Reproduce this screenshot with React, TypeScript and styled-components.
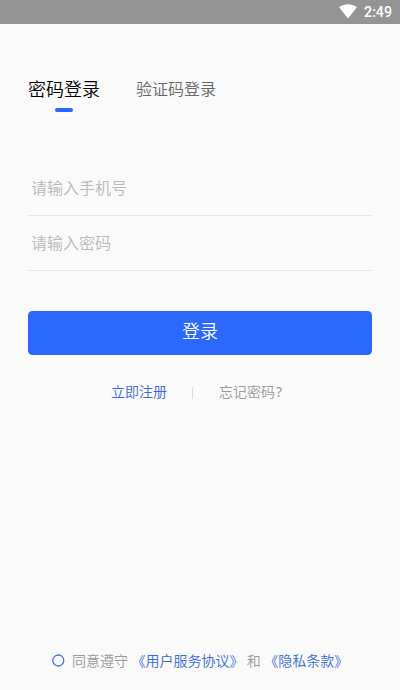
import React from 'react';
import styled, { createGlobalStyle } from 'styled-components';

const GlobalStyle = createGlobalStyle`
  * { box-sizing: border-box; }
  body { margin: 0; background: #fafafa; font-family: Roboto, "Noto Sans CJK SC", sans-serif; font-weight: 350; }
  button, input { font: inherit; border: 0; padding: 0; background: none; outline: 0; }
`;
const Screen = styled.div`
  width: 400px; height: 690px; display: flex; flex-direction: column; background: #fafafa; overflow: hidden;
`;
const StatusBar = styled.header`
  height: 24px; flex: none; display: flex; align-items: center; justify-content: flex-end; gap: 7px;
  padding-right: 8px; background: #949494; color: #fff; font-family: Roboto, sans-serif; font-size: 14.2px; font-weight: 500; line-height: 24px;
`;
const WifiIcon = styled.svg`
  display: block; margin-bottom: 2px;
`;
const Main = styled.main`
  flex: 1; display: flex; flex-direction: column; padding: 0 28px;
`;
const Tabs = styled.nav`
  display: flex; gap: 36px; margin-top: 52px; height: 36px;
`;
const Tab = styled.button<{ $active?: boolean }>`
  display: flex; flex-direction: column; align-items: center; height: 36px; line-height: 28px;
  font-size: ${p => (p.$active ? 18 : 16)}px; color: ${p => (p.$active ? '#000' : '#666')};
  &::after { content: ''; width: 18px; height: 4px; margin-top: 4px; border-radius: 2px; background: ${p => (p.$active ? '#2b68ff' : 'transparent')}; }
`;
const Form = styled.form`
  display: flex; flex-direction: column; margin-top: 49px;
`;
const Field = styled.input`
  height: 55px; padding: 0 3px; border-bottom: 1px solid #e5e5e5; font-size: 16px; color: #333;
  &::placeholder { color: #b8b8b8; opacity: 1; }
`;
const Submit = styled.button`
  height: 44px; margin-top: 40px; border-radius: 4.5px; background: #2b68ff; color: #fff; font-size: 18px; line-height: 42px; padding-bottom: 2px;
`;
const Links = styled.div`
  display: flex; align-items: center; margin: 27px 0 0 83px; height: 20px; font-size: 14px; line-height: 20px;
`;
const TextLink = styled.a<{ $muted?: boolean }>`
  color: ${p => (p.$muted ? '#999' : '#3769d5')};
`;
const QuestionMark = styled.span`
  margin-left: 1px; font-family: "Noto Sans", sans-serif; font-weight: 400;
`;
const Divider = styled.i`
  width: 1px; height: 12px; margin: 2px 26px 0 25px; background: #ddd;
`;
const Agreement = styled.footer`
  display: flex; align-items: center; height: 20px; margin: auto 0 19px 24px; font-size: 14px; line-height: 20px; color: #999; white-space: pre;
`;
const Radio = styled.svg`
  display: block; margin: 0 7px 1px 0;
`;

export default function App() {
  return (
    <Screen>
      <GlobalStyle />
      <StatusBar>
        <WifiIcon width="18" height="15" viewBox="0 0 18 15"><path d="M0 3.3C5.2-.7 12.8-.7 18 3.3L9 14.5Z" fill="#fff" /></WifiIcon>
        <span>2:49</span>
      </StatusBar>
      <Main>
        <Tabs>
          <Tab $active>密码登录</Tab>
          <Tab>验证码登录</Tab>
        </Tabs>
        <Form>
          <Field placeholder="请输入手机号" />
          <Field type="password" placeholder="请输入密码" />
          <Submit type="button">登录</Submit>
        </Form>
        <Links>
          <TextLink>立即注册</TextLink>
          <Divider />
          <TextLink $muted>忘记密码<QuestionMark>?</QuestionMark></TextLink>
        </Links>
        <Agreement>
          <Radio width="13" height="13" viewBox="0 0 13 13"><circle cx="6.3" cy="6.5" r="5.5" fill="none" stroke="#4673dd" strokeWidth="1.3" /></Radio>
          <span>同意遵守 </span><TextLink>《用户服务协议》</TextLink><span> 和 </span><TextLink>《隐私条款》</TextLink>
        </Agreement>
      </Main>
    </Screen>
  );
}
